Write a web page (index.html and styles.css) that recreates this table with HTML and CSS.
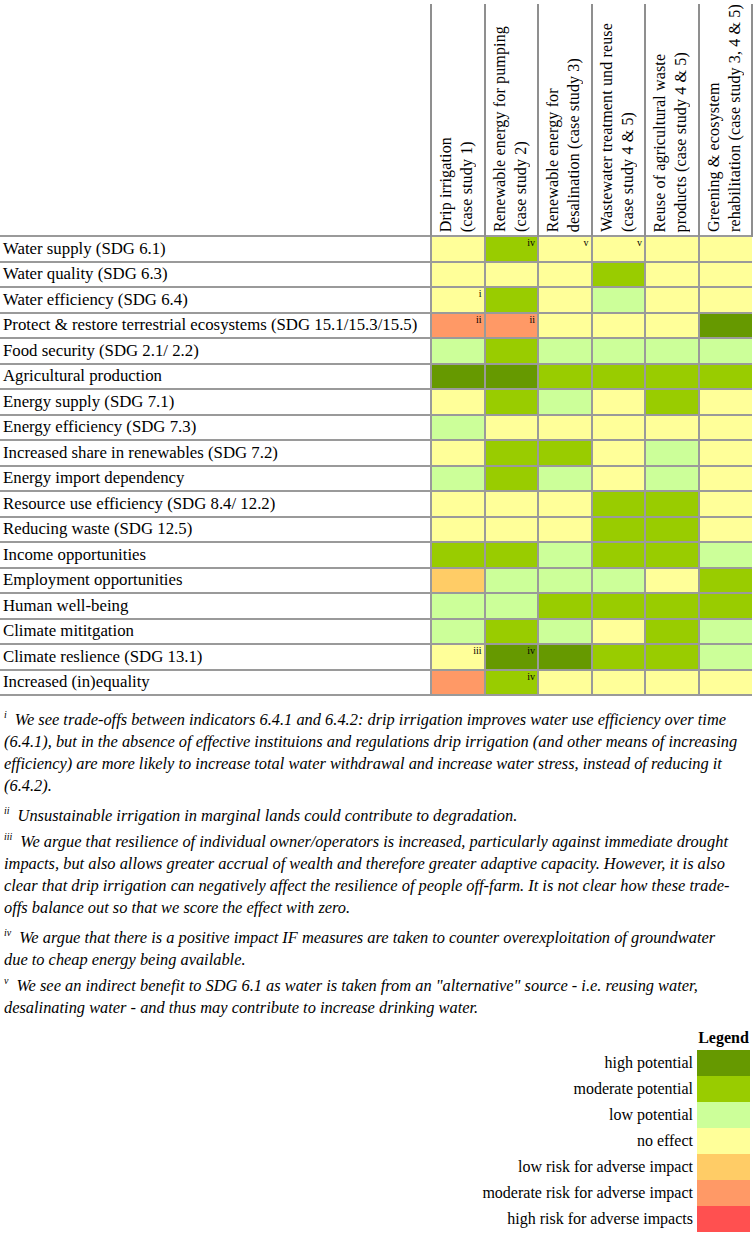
FILE: index.html
```html
<!DOCTYPE html>
<html lang="en">
<head>
    <meta charset="UTF-8">
    <title>SDG interactions of WEF interventions</title>
    <link rel="stylesheet" href="styles.css">
</head>
<body>
    <table class="matrix">
        <colgroup>
            <col class="col-label">
            <col class="col-cell"><col class="col-cell"><col class="col-cell">
            <col class="col-cell"><col class="col-cell"><col class="col-cell">
        </colgroup>
        <thead>
            <tr>
                <th class="corner"></th>
                <th class="head"><div class="head-text">Drip irrigation<br>(case study 1)</div></th>
                <th class="head"><div class="head-text">Renewable energy for pumping<br>(case study 2)</div></th>
                <th class="head"><div class="head-text">Renewable energy for<br>desalination (case study 3)</div></th>
                <th class="head"><div class="head-text">Wastewater treatment und reuse<br>(case study 4 &amp; 5)</div></th>
                <th class="head"><div class="head-text">Reuse of agricultural waste<br>products (case study 4 &amp; 5)</div></th>
                <th class="head"><div class="head-text">Greening &amp; ecosystem<br>rehabilitation (case study 3, 4 &amp; 5)</div></th>
            </tr>
        </thead>
        <tbody>
            <tr><td class="label">Water supply (SDG 6.1)</td>
                <td class="c-no"></td><td class="c-mod">iv</td><td class="c-no">v</td><td class="c-no">v</td><td class="c-no"></td><td class="c-no"></td></tr>
            <tr><td class="label">Water quality (SDG 6.3)</td>
                <td class="c-no"></td><td class="c-no"></td><td class="c-no"></td><td class="c-mod"></td><td class="c-no"></td><td class="c-no"></td></tr>
            <tr><td class="label">Water efficiency (SDG 6.4)</td>
                <td class="c-no">i</td><td class="c-mod"></td><td class="c-no"></td><td class="c-low"></td><td class="c-no"></td><td class="c-no"></td></tr>
            <tr><td class="label">Protect &amp; restore terrestrial ecosystems (SDG 15.1/15.3/15.5)</td>
                <td class="r-mod">ii</td><td class="r-mod">ii</td><td class="c-no"></td><td class="c-no"></td><td class="c-no"></td><td class="c-high"></td></tr>
            <tr><td class="label">Food security (SDG 2.1/ 2.2)</td>
                <td class="c-low"></td><td class="c-mod"></td><td class="c-low"></td><td class="c-low"></td><td class="c-low"></td><td class="c-low"></td></tr>
            <tr><td class="label">Agricultural production</td>
                <td class="c-high"></td><td class="c-high"></td><td class="c-mod"></td><td class="c-mod"></td><td class="c-mod"></td><td class="c-mod"></td></tr>
            <tr><td class="label">Energy supply (SDG 7.1)</td>
                <td class="c-no"></td><td class="c-mod"></td><td class="c-low"></td><td class="c-no"></td><td class="c-mod"></td><td class="c-no"></td></tr>
            <tr><td class="label">Energy efficiency (SDG 7.3)</td>
                <td class="c-low"></td><td class="c-no"></td><td class="c-no"></td><td class="c-no"></td><td class="c-no"></td><td class="c-no"></td></tr>
            <tr><td class="label">Increased share in renewables (SDG 7.2)</td>
                <td class="c-no"></td><td class="c-mod"></td><td class="c-mod"></td><td class="c-no"></td><td class="c-low"></td><td class="c-no"></td></tr>
            <tr><td class="label">Energy import dependency</td>
                <td class="c-low"></td><td class="c-mod"></td><td class="c-low"></td><td class="c-no"></td><td class="c-low"></td><td class="c-no"></td></tr>
            <tr><td class="label">Resource use efficiency (SDG 8.4/ 12.2)</td>
                <td class="c-no"></td><td class="c-no"></td><td class="c-no"></td><td class="c-mod"></td><td class="c-mod"></td><td class="c-no"></td></tr>
            <tr><td class="label">Reducing waste (SDG 12.5)</td>
                <td class="c-no"></td><td class="c-no"></td><td class="c-no"></td><td class="c-mod"></td><td class="c-mod"></td><td class="c-no"></td></tr>
            <tr><td class="label">Income opportunities</td>
                <td class="c-mod"></td><td class="c-mod"></td><td class="c-low"></td><td class="c-mod"></td><td class="c-mod"></td><td class="c-low"></td></tr>
            <tr><td class="label">Employment opportunities</td>
                <td class="r-low"></td><td class="c-low"></td><td class="c-low"></td><td class="c-low"></td><td class="c-no"></td><td class="c-mod"></td></tr>
            <tr><td class="label">Human well-being</td>
                <td class="c-low"></td><td class="c-low"></td><td class="c-mod"></td><td class="c-mod"></td><td class="c-mod"></td><td class="c-mod"></td></tr>
            <tr><td class="label">Climate mititgation</td>
                <td class="c-low"></td><td class="c-mod"></td><td class="c-low"></td><td class="c-no"></td><td class="c-mod"></td><td class="c-low"></td></tr>
            <tr><td class="label">Climate reslience (SDG 13.1)</td>
                <td class="c-no">iii</td><td class="c-high">iv</td><td class="c-high"></td><td class="c-mod"></td><td class="c-mod"></td><td class="c-low"></td></tr>
            <tr><td class="label">Increased (in)equality</td>
                <td class="r-mod"></td><td class="c-mod">iv</td><td class="c-no"></td><td class="c-no"></td><td class="c-no"></td><td class="c-no"></td></tr>
        </tbody>
    </table>

    <div class="notes">
        <p class="note"><sup class="mark">i</sup>We see trade-offs between indicators 6.4.1 and 6.4.2: drip irrigation improves water use efficiency over time (6.4.1), but in the absence of effective instituions and regulations drip irrigation (and other means of increasing efficiency) are more likely to increase total water withdrawal and increase water stress, instead of reducing it (6.4.2).</p>
        <p class="note note-tight"><sup class="mark">ii</sup>Unsustainable irrigation in marginal lands could contribute to degradation.</p>
        <p class="note"><sup class="mark">iii</sup>We argue that resilience of individual owner/operators is increased, particularly against immediate drought impacts, but also allows greater accrual of wealth and therefore greater adaptive capacity. However, it is also clear that drip irrigation can negatively affect the resilience of people off-farm. It is not clear how these trade-offs balance out so that we score the effect with zero.</p>
        <p class="note note-tight"><sup class="mark">iv</sup>We argue that there is a positive impact IF measures are taken to counter overexploitation of groundwater due to cheap energy being available.</p>
        <p class="note"><sup class="mark">v</sup>We see an indirect benefit to SDG 6.1 as water is taken from an "alternative" source - i.e. reusing water, desalinating water - and thus may contribute to increase drinking water.</p>
    </div>

    <div class="legend">
        <div class="legend-grid">
            <span></span><span class="legend-title">Legend</span>
            <span class="legend-label">high potential</span><span class="swatch c-high"></span>
            <span class="legend-label">moderate potential</span><span class="swatch c-mod"></span>
            <span class="legend-label">low potential</span><span class="swatch c-low"></span>
            <span class="legend-label">no effect</span><span class="swatch c-no"></span>
            <span class="legend-label">low risk for adverse impact</span><span class="swatch r-low"></span>
            <span class="legend-label">moderate risk for adverse impact</span><span class="swatch r-mod"></span>
            <span class="legend-label">high risk for adverse impacts</span><span class="swatch r-high"></span>
        </div>
    </div>
</body>
</html>
```

FILE: styles.css
```css
body {
    font-family: "Liberation Serif", "Times New Roman", serif;
    margin: 0;
    padding: 0;
    background-color: #ffffff;
    color: #000;
}

/* matrix table */

.matrix {
    width: 753px;
    margin-top: 4px;
    border-collapse: collapse;
    table-layout: fixed;
}

.col-label {
    width: 431px;
}

.matrix th.head {
    height: 226px;
    padding: 0 0 3px 3px;
    border-left: 2px solid #8f8f8f;
    border-right: 2px solid #8f8f8f;
    vertical-align: bottom;
    text-align: left;
    font-weight: normal;
}

.matrix th.corner {
    border: none;
}

.head-text {
    writing-mode: vertical-rl;
    transform: rotate(180deg);
    font-size: 16px;
    line-height: 21px;
    letter-spacing: 0.15px;
    white-space: nowrap;
}

.matrix td {
    height: 23.5px;
    padding: 0 2px 0 0;
    border: 2px solid #9a9a9a;
    text-align: right;
    vertical-align: top;
    font-size: 10px;
    line-height: 11px;
}

.matrix td.label {
    border-left: none;
    padding: 0 0 0 3px;
    background-color: #ffffff;
    text-align: left;
    vertical-align: middle;
    font-size: 16.8px;
    line-height: 20px;
    white-space: nowrap;
}

.matrix tr td:last-child {
    border-right: none;
}

/* colour scale */

.c-high { background-color: #669900; }
.c-mod  { background-color: #99cc00; }
.c-low  { background-color: #ccff99; }
.c-no   { background-color: #ffff99; }
.r-low  { background-color: #ffcc66; }
.r-mod  { background-color: #ff9966; }
.r-high { background-color: #ff5050; }

/* footnotes */

.notes {
    padding: 13px 12px 0 4px;
}

.note {
    margin: 0 0 8px 0;
    font-style: italic;
    font-size: 16.4px;
    line-height: 22px;
}

.note-tight {
    margin-bottom: 4px;
}

.mark {
    display: inline-block;
    margin-right: 8px;
    font-size: 10px;
    line-height: 10px;
    vertical-align: 7px;
}

/* legend */

.legend {
    display: flex;
    justify-content: flex-end;
    padding: 3px 4px 0 0;
}

.legend-grid {
    display: grid;
    grid-template-columns: auto 53px;
    grid-template-rows: 20px;
    grid-auto-rows: 26px;
    column-gap: 4px;
    align-items: center;
}

.legend-title {
    align-self: start;
    font-weight: bold;
    font-size: 16px;
    line-height: 16px;
    text-align: center;
}

.legend-label {
    font-size: 16px;
    text-align: right;
}

.swatch {
    height: 26px;
}
```
